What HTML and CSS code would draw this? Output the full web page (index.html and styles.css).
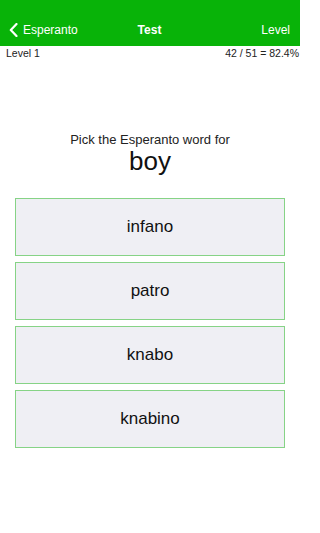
FILE: index.html
```html
<!DOCTYPE html>
<html>
<head>
<meta charset="utf-8">
<link rel="stylesheet" href="styles.css">
</head>
<body>
<header class="header">
  <div class="status"></div>
  <nav class="nav">
    <div class="back">
      <svg class="chev" width="9" height="14" viewBox="0 0 9 14"><path d="M7.5 1 L1.8 7 L7.5 13" fill="none" stroke="#fff" stroke-width="2.2" stroke-linecap="round" stroke-linejoin="round"/></svg>
      <span>Esperanto</span>
    </div>
    <div class="title">Test</div>
    <div class="right">Level</div>
  </nav>
</header>
<div class="info">
  <span>Level 1</span>
  <span>42 / 51 = 82.4%</span>
</div>
<main class="main">
  <div class="prompt">Pick the Esperanto word for</div>
  <div class="word">boy</div>
  <div class="choices">
    <div class="choice">infano</div>
    <div class="choice">patro</div>
    <div class="choice">knabo</div>
    <div class="choice">knabino</div>
  </div>
</main>
</body>
</html>
```
FILE: styles.css
```css
html, body {
  margin: 0;
  padding: 0;
  background: #fff;
}
body {
  width: 300px;
  height: 533px;
  font-family: "Liberation Sans", Arial, sans-serif;
  color: #111;
  overflow: hidden;
}
.header {
  background: #08b308;
  color: #fff;
}
.status {
  height: 20px;
}
.nav {
  height: 26px;
  box-sizing: border-box;
  padding: 3px 10px 0 9px;
  display: grid;
  grid-template-columns: 1fr auto 1fr;
  align-items: start;
  font-size: 12px;
  line-height: 14px;
}
.back {
  display: flex;
  align-items: center;
  gap: 5px;
}
.chev {
  display: block;
  margin-top: -1px;
}
.title {
  font-weight: bold;
  text-align: center;
}
.right {
  text-align: right;
}
.info {
  display: flex;
  justify-content: space-between;
  height: 14px;
  padding: 0 1px 0 6px;
  font-size: 10.5px;
  line-height: 14px;
  color: #222;
}
.main {
  padding-top: 72px;
  text-align: center;
}
.prompt {
  font-size: 13px;
  line-height: 15px;
  color: #222;
}
.word {
  margin-top: 1px;
  font-size: 26px;
  line-height: 26px;
  color: #111;
}
.choices {
  margin: 24px 15px 0;
  display: flex;
  flex-direction: column;
  gap: 6px;
}
.choice {
  height: 58px;
  box-sizing: border-box;
  border: 1px solid #86d386;
  background: #efeff4;
  display: flex;
  align-items: center;
  justify-content: center;
  font-size: 17px;
  color: #111;
}
```
